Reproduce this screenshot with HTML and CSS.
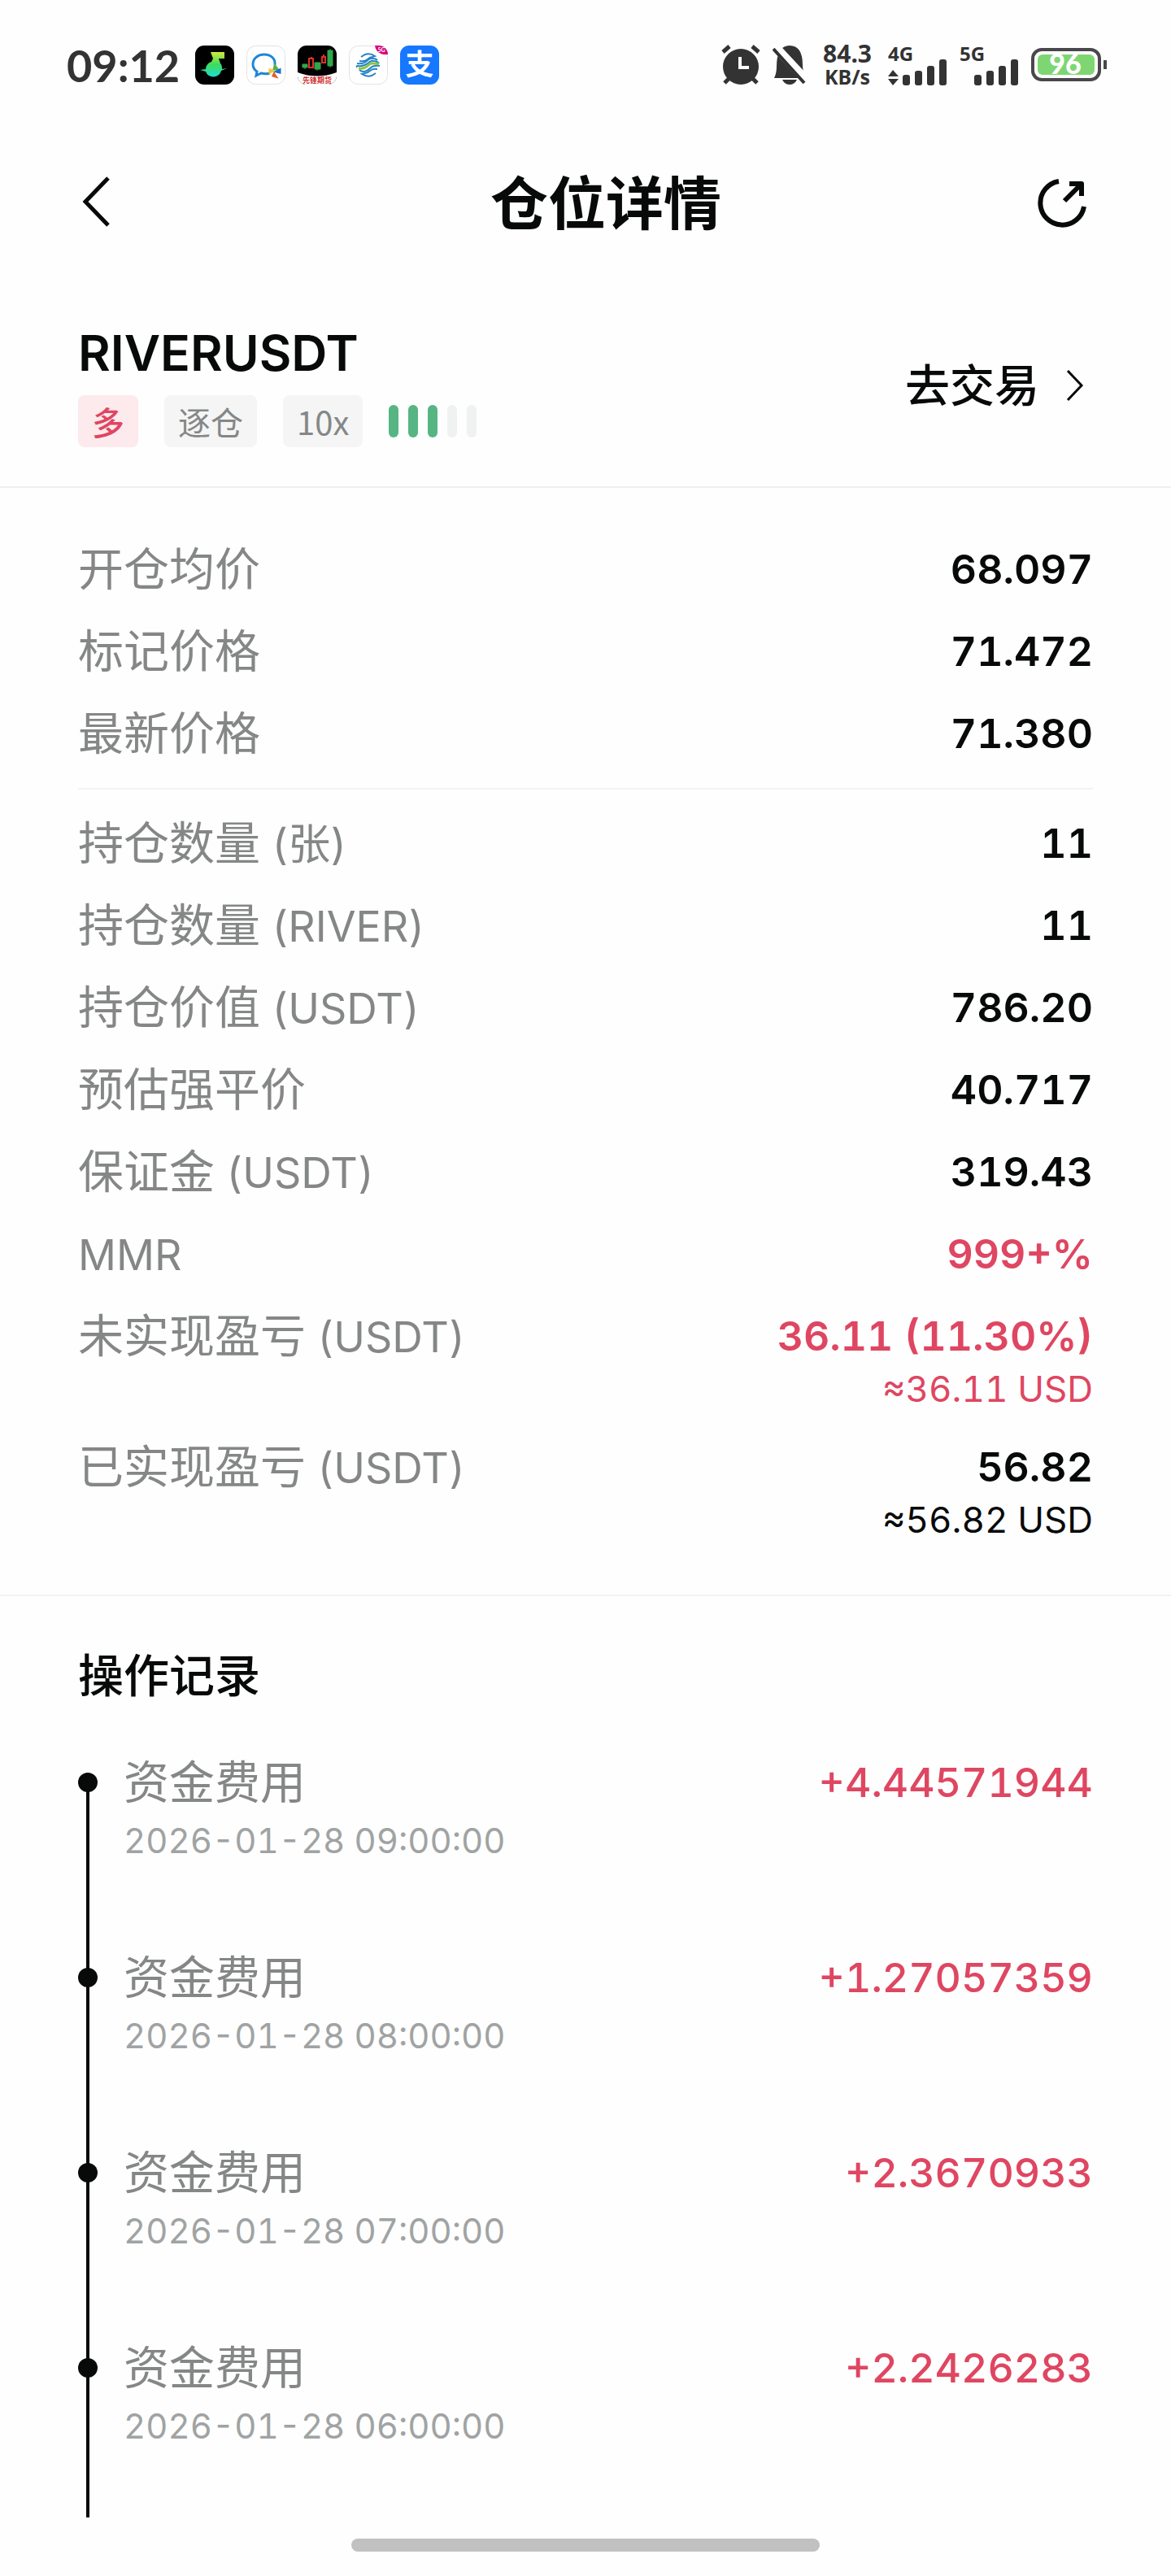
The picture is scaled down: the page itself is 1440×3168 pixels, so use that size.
FILE: index.html
```html
<!DOCTYPE html>
<html lang="zh-CN">

<head>
    <meta charset="UTF-8">
    <meta name="viewport" content="width=device-width, initial-scale=1.0">
    <title>仓位详情</title>
    <link rel="stylesheet" href="styles.css">
</head>

<body>
    <!-- Status Bar -->
    <div class="status-bar">
        <div class="status-left">
            <span class="time">09:12</span>
            <svg class="app-icon" viewBox="0 0 48 48">
                <defs>
                    <linearGradient id="note" x1="0" y1="0" x2="0" y2="1">
                        <stop offset="0" stop-color="#d6e83a" />
                        <stop offset="0.5" stop-color="#3ddc5c" />
                        <stop offset="1" stop-color="#1fdcd0" />
                    </linearGradient>
                </defs>
                <rect width="48" height="48" rx="11" fill="#000" />
                <path d="M19 8h17v8h-7l2 6c2 2 2 4 2 7l6-1-7 3a10 10 0 0 1-19 1l-7-2 7-1c0-4 3-8 7-9l2-4z" fill="url(#note)" />
            </svg>
            <svg class="app-icon" viewBox="0 0 48 48">
                <rect x="0.5" y="0.5" width="47" height="47" rx="11" fill="#fff" stroke="#e2e2e2" />
                <path d="M35 24c1-8-5-13-13-13-9 0-14 6-14 12 0 4 2 7 5 9l-1 5 6-3c4 1 8 1 11 0" fill="none" stroke="#1d86d8" stroke-width="3" />
                <path d="M35 25l3 4-4 0z" fill="#52b445" stroke="#52b445" stroke-width="3" />
                <path d="M41 30l0 3-4-1z" fill="#1d70c8" stroke="#1d70c8" stroke-width="3" />
                <path d="M34 35l2 3-3-1z" fill="#ea5a2c" stroke="#ea5a2c" stroke-width="3" />
                <path d="M29 30l3 1-3 2z" fill="#f8c32c" stroke="#f8c32c" stroke-width="3" />
            </svg>
            <svg class="app-icon" viewBox="0 0 48 48">
                <defs>
                    <clipPath id="round"><rect width="48" height="48" rx="11" /></clipPath>
                </defs>
                <g clip-path="url(#round)">
                    <rect width="48" height="48" fill="#000" />
                    <path d="M0 33q24 9 48 0v15H0z" fill="#fff" />
                    <path d="M6 23h6v4H6zM21 21h7v8h-7zM37 6h6v19h-6zM9 27v2M24 29v2M40 4v23" fill="#2fa84a" stroke="#2fa84a" />
                    <path d="M14 16h5v11h-5zM30 14h4v7h-4zM17 14v2M32 11v3" fill="none" stroke="#e0302a" stroke-width="2" />
                    <text x="24" y="46" class="app-caption">先锋期货</text>
                </g>
            </svg>
            <svg class="app-icon" viewBox="0 0 48 48">
                <rect x="0.5" y="0.5" width="47" height="47" rx="11" fill="#fff" stroke="#e2e2e2" />
                <g fill="none" stroke="#2583c8" stroke-width="2">
                    <path d="M15 14l5-3q6-2 12 2l-3 1q-3 0-6 3t-10 2" />
                    <path d="M10 22q8 1 12-3t8-3q3 0 5 2" />
                    <path d="M10 27q-1-2 1-2 7 1 12-3t7-3q5 0 7 3" />
                    <path d="M33 34l-5 3q-6 2-12-2l4-1q3 0 6-3t9-2" />
                    <path d="M38 25q-8-1-12 3t-8 4q-3 0-5-2" />
                </g>
                <path d="M12 28q7 1 11-3t7-3q4 0 7 1" fill="none" stroke="#8cc63e" stroke-width="3" />
                <path d="M32 0h5a11 11 0 0 1 11 11Q34 12 32 0z" fill="#d4087c" />
                <text x="40" y="8" class="app-badge">5G</text>
            </svg>
            <svg class="app-icon" viewBox="0 0 48 48">
                <rect width="48" height="48" rx="11" fill="#1677ff" />
                <text x="24" y="36" class="app-glyph">支</text>
            </svg>
        </div>
        <div class="status-right">
            <svg class="icon-alarm" viewBox="0 0 50 50">
                <circle cx="25" cy="27" r="22" fill="#333" />
                <path d="M3 9l8-7M47 9l-8-7M5 47l7-7M45 47l-7-7" stroke="#333" stroke-width="5" />
                <path d="M24 15v13h11" fill="none" stroke="#fff" stroke-width="4" />
            </svg>
            <svg class="icon-bell" viewBox="0 0 42 50">
                <path d="M2 41q3-6 3-14Q5 1 21 1t16 24q0 9 4 16z" fill="#333" />
                <path d="M12 43h18q-3 6-9 6t-9-6z" fill="#333" />
                <path d="M0-1l42 45" stroke="#fff" stroke-width="11" />
                <path d="M1 5l38 42" stroke="#333" stroke-width="4" />
            </svg>
            <div class="speed"><span>84.3</span><span class="unit">KB/s</span></div>
            <svg class="icon-signal" viewBox="0 -8 74 66">
                <text x="0" y="20" class="net">4G</text>
                <path d="M6 31l7 8H0zM6 50l7-8H0z" fill="#333" />
                <g fill="#333">
                    <rect x="18" y="37" width="9" height="13" rx="3" />
                    <rect x="33" y="32" width="9" height="18" rx="3" />
                    <rect x="48" y="26" width="9" height="24" rx="3" />
                    <rect x="63" y="18" width="9" height="32" rx="3" />
                </g>
            </svg>
            <svg class="icon-signal" viewBox="0 -8 74 66">
                <text x="0" y="20" class="net">5G</text>
                <g fill="#333">
                    <rect x="18" y="37" width="9" height="13" rx="3" />
                    <rect x="33" y="32" width="9" height="18" rx="3" />
                    <rect x="48" y="26" width="9" height="24" rx="3" />
                    <rect x="63" y="18" width="9" height="32" rx="3" />
                </g>
            </svg>
            <svg class="icon-battery" viewBox="0 0 94 42">
                <rect x="2" y="2" width="82" height="37" rx="11" fill="#fff" stroke="#48484a" stroke-width="4" />
                <rect x="8" y="8" width="70" height="25" rx="6" fill="#7ed672" />
                <path d="M89 15h4v11h-4z" fill="#48484a" />
                <text x="42" y="32" class="battery-text">96</text>
            </svg>
        </div>
    </div>

    <!-- Header -->
    <header class="header">
        <button class="icon-btn back" type="button" aria-label="返回">
            <svg width="44" height="64" viewBox="0 0 44 64">
                <path d="M37 3L9 32l28 29" fill="none" stroke="#080a0a" stroke-width="5" />
            </svg>
        </button>
        <h1>仓位详情</h1>
        <button class="icon-btn" type="button" aria-label="分享">
            <svg width="64" height="64" viewBox="0 0 64 64">
                <path d="M28 7A27 27 0 1 0 59 38" fill="none" stroke="#080a0a" stroke-width="6" />
                <path d="M41 10h15v15M56 10L35 31" fill="none" stroke="#080a0a" stroke-width="6" stroke-linejoin="round" />
            </svg>
        </button>
    </header>

    <!-- Trading Pair -->
    <section class="pair">
        <div>
            <h2>RIVERUSDT</h2>
            <div class="tags">
                <span class="tag tag-long">多</span>
                <span class="tag">逐仓</span>
                <span class="tag">10x</span>
                <div class="risk">
                    <i class="on"></i><i class="on"></i><i class="on"></i><i></i><i></i>
                </div>
            </div>
        </div>
        <a class="trade" href="#">去交易
            <svg width="24" height="40" viewBox="0 0 24 40">
                <path d="M3 2l17 18L3 38" fill="none" stroke="#080a0a" stroke-width="3" />
            </svg>
        </a>
    </section>

    <!-- Position Details -->
    <section class="details">
        <dl>
            <div class="row"><dt>开仓均价</dt><dd>68.097</dd></div>
            <div class="row"><dt>标记价格</dt><dd>71.472</dd></div>
            <div class="row"><dt>最新价格</dt><dd>71.380</dd></div>
        </dl>
        <hr>
        <dl>
            <div class="row"><dt>持仓数量<small> (张)</small></dt><dd>11</dd></div>
            <div class="row"><dt>持仓数量<small> (RIVER)</small></dt><dd>11</dd></div>
            <div class="row"><dt>持仓价值<small> (USDT)</small></dt><dd>786.20</dd></div>
            <div class="row"><dt>预估强平价</dt><dd>40.717</dd></div>
            <div class="row"><dt>保证金<small> (USDT)</small></dt><dd>319.43</dd></div>
            <div class="row"><dt><small>MMR</small></dt><dd class="red">999+%</dd></div>
            <div class="row"><dt>未实现盈亏<small> (USDT)</small></dt>
                <dd class="red">36.11 (11.30%)<p class="approx">≈36.11 USD</p></dd>
            </div>
            <div class="row"><dt>已实现盈亏<small> (USDT)</small></dt>
                <dd>56.82<p class="approx">≈56.82 USD</p></dd>
            </div>
        </dl>
    </section>

    <!-- Operation History -->
    <section class="history">
        <h3>操作记录</h3>
        <ul>
            <li>
                <div><p class="type">资金费用</p><time>2026-01-28 09:00:00</time></div>
                <span class="amount">+4.44571944</span>
            </li>
            <li>
                <div><p class="type">资金费用</p><time>2026-01-28 08:00:00</time></div>
                <span class="amount">+1.27057359</span>
            </li>
            <li>
                <div><p class="type">资金费用</p><time>2026-01-28 07:00:00</time></div>
                <span class="amount">+2.3670933</span>
            </li>
            <li>
                <div><p class="type">资金费用</p><time>2026-01-28 06:00:00</time></div>
                <span class="amount">+2.2426283</span>
            </li>
        </ul>
    </section>

    <div class="home-bar"></div>
</body>

</html>
```

FILE: styles.css
```css
/* Global Styles */
* {
    box-sizing: border-box;
    margin: 0;
    padding: 0;
}

body {
    font-family: Inter, "Noto Sans CJK SC", sans-serif;
    font-variant-numeric: tabular-nums;
    background: #fefefe;
    color: #080a0a;
}

svg {
    display: block;
}

/* Status Bar */
.status-bar {
    display: flex;
    align-items: center;
    justify-content: space-between;
    height: 160px;
    padding: 0 78px 0 82px;
    font-family: Lato, "Noto Sans CJK SC", sans-serif;
    color: #333;
}

.status-left {
    display: flex;
    align-items: center;
    gap: 15px;
}

.time {
    font-size: 54px;
    font-weight: 700;
    margin-right: 4px;
}

.app-icon {
    width: 48px;
    height: 48px;
}

.app-caption {
    font-size: 9px;
    font-weight: 700;
    fill: #d02a2a;
    text-anchor: middle;
}

.app-badge {
    font-size: 7px;
    font-weight: 700;
    fill: #fff;
    text-anchor: middle;
}

.app-glyph {
    font-size: 35px;
    font-weight: 700;
    fill: #fff;
    text-anchor: middle;
}

.status-right {
    display: flex;
    align-items: center;
    gap: 14px;
}

.icon-alarm {
    width: 50px;
    height: 50px;
}

.icon-bell {
    width: 42px;
    height: 50px;
}

.speed {
    display: flex;
    flex-direction: column;
    align-items: center;
    margin: 0 6px;
    font-family: "Noto Sans", sans-serif;
    font-size: 30px;
    font-weight: 700;
    line-height: 28px;
}

.speed .unit {
    font-size: 25px;
}

.icon-signal {
    width: 74px;
    height: 66px;
}

.net {
    font-family: "Noto Sans", sans-serif;
    font-size: 24px;
    font-weight: 700;
    fill: #333;
}

.icon-battery {
    width: 94px;
    height: 42px;
}

.battery-text {
    font-size: 34px;
    font-weight: 900;
    fill: #fff;
    text-anchor: middle;
}

/* Header */
.header {
    display: flex;
    align-items: center;
    height: 176px;
    padding: 0 102px 0 96px;
}

.header h1 {
    flex: 1;
    margin-bottom: 6px;
    font-size: 71px;
    font-weight: 700;
    text-align: center;
}

.icon-btn {
    background: none;
    border: none;
    cursor: pointer;
}

.back {
    width: 120px;
}

/* Trading Pair */
.pair {
    display: flex;
    justify-content: space-between;
    align-items: center;
    padding: 62px 96px 48px;
    border-bottom: 2px solid #efefef;
}

.pair h2 {
    font-size: 61px;
    font-weight: 600;
    line-height: 72px;
}

.tags {
    display: flex;
    align-items: center;
    gap: 32px;
    margin-top: 16px;
}

.tag {
    padding: 0 17px;
    border-radius: 8px;
    background: #f5f5f5;
    color: #858787;
    font-family: "Noto Sans CJK SC", sans-serif;
    font-size: 40px;
    line-height: 64px;
}

.tag-long {
    background: #fdeaed;
    color: #df4661;
    font-weight: 500;
}

.risk {
    display: flex;
    gap: 12px;
}

.risk i {
    width: 12px;
    height: 40px;
    border-radius: 6px;
    background: #f0f1f1;
}

.risk .on {
    background: #56b583;
}

.trade {
    display: flex;
    align-items: center;
    gap: 32px;
    padding-right: 10px;
    color: inherit;
    font-size: 55px;
    font-weight: 500;
    line-height: 72px;
    text-decoration: none;
}

/* Position Details */
.details {
    padding: 62px 96px 58px;
    border-bottom: 2px solid #f3f3f3;
}

.details dl {
    display: grid;
    gap: 24px;
}

.details hr {
    margin: 28px 0;
    border: none;
    border-top: 2px solid #f3f3f3;
}

.row {
    display: flex;
    justify-content: space-between;
    line-height: 77px;
}

.row dt {
    color: #858787;
    font-size: 56px;
}

.row small {
    font-size: 52px;
    line-height: 52px;
}

.row dd {
    font-size: 50px;
    font-weight: 600;
    text-align: right;
}

.row .approx {
    margin-bottom: 8px;
    font-size: 44px;
    font-weight: 400;
    line-height: 52px;
}

.red,
.amount {
    color: #df4661;
}

/* Operation History */
.history {
    padding: 60px 96px 0;
}

.history h3 {
    margin-bottom: 56px;
    font-size: 56px;
    font-weight: 500;
    line-height: 77px;
}

.history ul {
    list-style: none;
}

.history li {
    display: flex;
    justify-content: space-between;
    position: relative;
    padding: 0 0 96px 56px;
    line-height: 72px;
}

/* timeline dot and the line to the next record */
.history li::before {
    content: "";
    position: absolute;
    top: 24px;
    left: 0;
    width: 24px;
    height: 24px;
    border-radius: 50%;
    background: #080a0a;
}

.history li::after {
    content: "";
    position: absolute;
    top: 36px;
    bottom: -36px;
    left: 10px;
    width: 4px;
    background: #080a0a;
}

.history li:last-child {
    padding-bottom: 76px;
}

.history li:last-child::after {
    bottom: 0;
}

.type {
    color: #858787;
    font-size: 56px;
}

.history time {
    display: block;
    color: #a0a3a3;
    font-size: 42px;
}

.amount {
    font-size: 50px;
    font-weight: 500;
}

.home-bar {
    width: 40%;
    height: 16px;
    margin: 26px auto 24px;
    border-radius: 8px;
    background: #c1c1c1;
}
```
